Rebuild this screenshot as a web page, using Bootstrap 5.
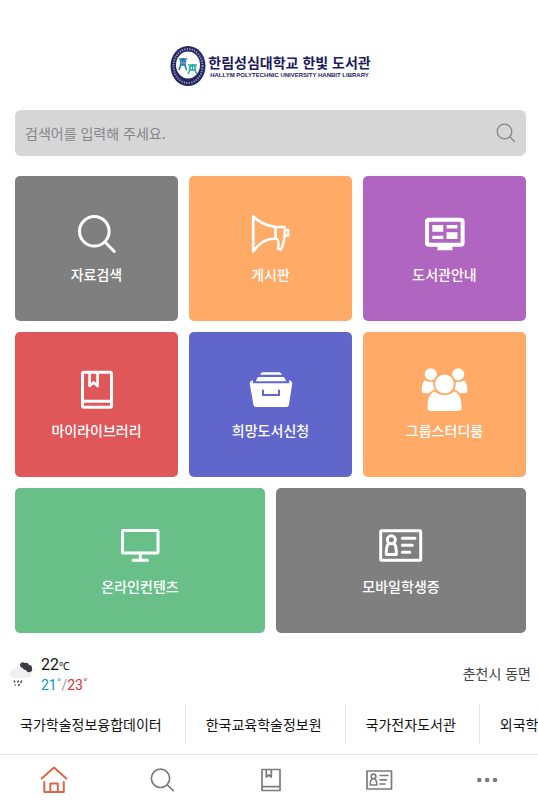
<!DOCTYPE html>
<html lang="ko">
<head>
<meta charset="utf-8">
<meta name="viewport" content="width=device-width, initial-scale=1">
<title>한림성심대학교 한빛 도서관</title>
<link href="https://cdn.jsdelivr.net/npm/bootstrap@5.3.0/dist/css/bootstrap.min.css" rel="stylesheet">
<style>
  body { font-family: "Noto Sans CJK KR", "Noto Sans", sans-serif; font-size: 14px; line-height: 22px; color: #111; background: #fff; }
  a { color: inherit; text-decoration: none; }
  svg { display: block; flex: none; }
  .line-art { fill: none; stroke: currentColor; stroke-linecap: round; stroke-linejoin: round; }

  .page-main { padding: 0 12px 0 15px; }
  .brand-row { height: 110px; padding-top: 22px; }
  .brand-link { gap: 2px; }
  .brand-name { color: #1b1a5e; font-size: 14px; font-weight: 700; line-height: 18px; }
  .brand-sub { color: #1b1a5e; font-family: "Liberation Sans", sans-serif; font-size: 6px; font-weight: 700; line-height: 8px; }

  .search-box { height: 46px; padding: 0 10px; margin-bottom: 20px; background: #d6d6d6; border-radius: 6px; }
  .search-box input { font-size: 14px; color: #555; }
  .search-box input::placeholder { color: #85868a; opacity: 1; }
  .search-box button { color: #858585; }

  .tile-grid { display: grid; grid-template-columns: repeat(6, 1fr); gap: 11px; }
  .tile { grid-column: span 2; height: 145px; padding-top: 36px; gap: 7px; border-radius: 5px; color: #fff; font-weight: 500; }
  .tile.wide { grid-column: span 3; }
  .t-gray { background: #7f7f7f; }
  .t-orange { background: #ffaa66; }
  .t-purple { background: #b066c0; }
  .t-red { background: #df5759; }
  .t-blue { background: #6166cb; }
  .t-green { background: #68c088; }

  .weather { padding: 22px 7px 0 8px; height: 71px; }
  .temps { font-family: Roboto, "Noto Sans", sans-serif; line-height: 20px; }
  .temp-now { font-size: 16px; }
  .temp-now small { font-size: 11px; line-height: 1; }
  .t-low { color: #0d97c4; }
  .t-high { color: #d6303a; }
  .t-sep { color: #999; }
  .place { color: #444; padding-top: 7px; }

  .site-links { overflow: hidden; white-space: nowrap; }
  .site-links a { flex: none; padding: 9px 23px 9px 20px; border-right: 1px solid #e3e3e3; }

  .tab-bar { border-top: 1px solid #e3e3e3; height: 46px; padding: 9px 35px 0 38px; color: #7b7b7b; }
  .tab-bar .active { color: #db6749; }
</style>
<script src="https://cdn.jsdelivr.net/npm/bootstrap@5.3.0/dist/js/bootstrap.bundle.min.js"></script>
</head>
<body>
<div class="d-flex flex-column min-vh-100">
  <main class="page-main">
    <header class="brand-row d-flex justify-content-center align-items-center">
      <a href="#" class="brand-link d-flex align-items-center">
        <svg width="36" height="42" viewBox="0 0 36 42" aria-hidden="true">
          <ellipse cx="18" cy="21" rx="17.5" ry="20" fill="#26265f"/>
          <ellipse cx="18" cy="21" rx="14.5" ry="17" fill="none" stroke="#8f93bb" stroke-width="2" stroke-dasharray="1.3 1.2"/>
          <ellipse cx="18" cy="20" rx="12" ry="13.5" fill="#fff"/>
          <g fill="none" stroke="#2375b5" stroke-width="1.5"><path d="M9 14h8M10 17q3-4 6 0M11 15v3q-1 5-2 7M15 15v3q0 5 2 7M10 20h6M13 13v7"/></g>
          <g fill="none" stroke="#27aaa5" stroke-width="1.5"><path d="M18 20h9M19 23q4-5 7 0M20 21v3q-1 3-2 5M25 21v3q0 3 2 5M19 25h7M22.500 19v6"/></g>
        </svg>
        <span class="d-flex flex-column align-items-center">
          <span class="brand-name">한림성심대학교 한빛 도서관</span>
          <span class="brand-sub">HALLYM POLYTECHNIC UNIVERSITY HANBIT LIBRARY</span>
        </span>
      </a>
    </header>

    <form class="search-box d-flex align-items-center" role="search">
      <input type="search" class="flex-grow-1 border-0 bg-transparent p-0" placeholder="검색어를 입력해 주세요." aria-label="검색어">
      <button type="button" class="border-0 bg-transparent p-0" aria-label="검색">
        <svg class="line-art" width="20" height="20" viewBox="0 0 20 20" stroke-width="1.3"><circle cx="8.500" cy="8.500" r="7.300"/><path d="M14 14l4.500 4.500"/></svg>
      </button>
    </form>

    <nav class="tile-grid" aria-label="주요 메뉴">
      <a href="#" class="tile t-gray d-flex flex-column align-items-center">
        <svg class="line-art" width="48" height="44" viewBox="0 0 48 44" stroke-width="3"><circle cx="21.300" cy="19.300" r="14.800"/><path d="M32 30l9.300 9.500"/></svg>
        <span>자료검색</span>
      </a>
      <a href="#" class="tile t-orange d-flex flex-column align-items-center">
        <svg class="line-art" width="48" height="44" viewBox="0 0 48 44" stroke-width="2.700"><path d="M6.200 4.500C12 10 20 14 28.500 15V26.500C20 26.500 12 31 6.200 39.500Z"/><path d="M28.500 15H37.500C38.200 24 37 32 34 37.500L30.800 36.500Q32.500 31 30.500 27.500L28.500 26.500" stroke-width="2.400"/><path d="M38.300 18h3v5.500h-3" stroke-width="2.400"/></svg>
        <span>게시판</span>
      </a>
      <a href="#" class="tile t-purple d-flex flex-column align-items-center">
        <svg width="48" height="44" viewBox="0 0 48 44" fill="currentColor"><rect x="6" y="7.700" width="35.600" height="25" rx="2" fill="none" stroke="currentColor" stroke-width="4"/><path d="M16.500 34h15v4.200h-15zM11.300 13h11v6.800h-11zM11.300 23.700h11V27h-11zM25.500 13h11v3.400h-11zM25.500 20.300h11V27h-11z"/></svg>
        <span>도서관안내</span>
      </a>
      <a href="#" class="tile t-red d-flex flex-column align-items-center">
        <svg class="line-art" width="48" height="44" viewBox="0 0 48 44" stroke-width="3"><rect x="9.500" y="4.200" width="29" height="35" rx="1.500"/><path d="M10 33.300h28"/><path d="M16.600 5v13l4-3.500 4 3.500V5" stroke-width="2.700"/></svg>
        <span>마이라이브러리</span>
      </a>
      <a href="#" class="tile t-blue d-flex flex-column align-items-center">
        <svg width="48" height="44" viewBox="0 0 48 44" fill="currentColor"><path d="M15.500 4.300h17q1.500 0 2.500 2.500H13q1-2.500 2.500-2.500zM12 9h24q2 0 3 4.300H9Q10 9 12 9zM5.800 12v3.300h36.400V12q3.500 1.500 3 4l-3.300 21q-.3 2-2.300 2H8.800q-2 0-2.300-2L2.800 16q-.5-2.500 3-4z"/><path d="M16 21.700v5.400h16v-5.400" fill="none" stroke="#6166cb" stroke-width="2"/></svg>
        <span>희망도서신청</span>
      </a>
      <a href="#" class="tile t-orange d-flex flex-column align-items-center">
        <svg width="48" height="44" viewBox="0 0 48 44" fill="currentColor"><circle cx="9.800" cy="6.300" r="6.100"/><circle cx="37.200" cy="6.300" r="6.100"/><path d="M4 12.500q6 2.500 12 1v11.700H3.500Q.5 25.200.7 22q.2-7.500 3.300-9.500zM43 12.500q-6 2.500-12 1v11.700h12.500q3 0 2.800-3.200-.2-7.500-3.300-9.500z"/><g stroke="#ffaa66" stroke-width="1.800"><path d="M13 22.500q10.500 7 21 0 7.500 3 7.500 17 0 4.500-5 4.500h-26q-5 0-5-4.500 0-14 7.500-17z"/><circle cx="23.500" cy="16" r="10.300"/></g></svg>
        <span>그룹스터디룸</span>
      </a>
      <a href="#" class="tile wide t-green d-flex flex-column align-items-center">
        <svg class="line-art" width="48" height="44" viewBox="0 0 48 44" stroke-width="3"><rect x="6.500" y="6.500" width="35.500" height="22.500" rx="1"/><path d="M24.300 29v7M17 36.300h14.500"/></svg>
        <span>온라인컨텐츠</span>
      </a>
      <a href="#" class="tile wide t-gray d-flex flex-column align-items-center">
        <svg class="line-art" width="48" height="44" viewBox="0 0 48 44" stroke-width="3"><rect x="3.700" y="6.700" width="40" height="29.600" rx="1"/><path d="M25.300 14.300H38M25.300 21.300h10M25.300 28.300h7.500"/><circle cx="14.300" cy="15.800" r="4"/><path d="M11.300 20q-2.300 2.500-2 10.500h10q.3-8-2-10.500"/></svg>
        <span>모바일학생증</span>
      </a>
    </nav>
  </main>

  <section class="weather d-flex align-items-start justify-content-between" aria-label="날씨">
    <div class="d-flex">
      <svg width="33" height="40" viewBox="0 0 33 40" aria-hidden="true">
        <path d="M5 23q-5-2-3-6 1-3 5-3 2-6 8-5l8 6q2 6-3 8z" fill="#f0f0f0"/>
        <path d="M12 9q2-3 5-1 3-1 4 2 3 0 3 3 1 3-2 4-3 1-4-2-3 0-3-2-3 0-3-4z" fill="#3b3d40"/>
        <path d="M6 25.500l1 2M10.500 25.500l-1 2M14 25.500l-1.500 2.500M7 29.500l.5 1M11.500 29l-1 2" stroke="#333" stroke-width="1.300"/>
      </svg>
      <div class="temps">
        <div class="temp-now">22<small>℃</small></div>
        <div><span class="t-low">21˚</span><span class="t-sep">/</span><span class="t-high">23˚</span></div>
      </div>
    </div>
    <span class="place">춘천시 동면</span>
  </section>

  <nav class="site-links d-flex" aria-label="관련 사이트">
    <a href="#">국가학술정보융합데이터</a>
    <a href="#">한국교육학술정보원</a>
    <a href="#">국가전자도서관</a>
    <a href="#">외국학술지지원센터</a>
  </nav>

  <nav class="tab-bar mt-auto d-flex justify-content-between" aria-label="하단 메뉴">
    <a href="#" class="active" aria-label="홈"><svg class="line-art" width="32" height="32" viewBox="0 0 32 32" stroke-width="2"><path d="M3.700 14.500L16 3.500l12.300 11M6.300 18v10h19.500V18M12.300 28v-8.500h7.500V28"/></svg></a>
    <a href="#" aria-label="검색"><svg class="line-art" width="32" height="32" viewBox="0 0 32 32" stroke-width="1.700"><circle cx="14.500" cy="14.300" r="9.200"/><path d="M21.300 21l6 5.700"/></svg></a>
    <a href="#" aria-label="마이라이브러리"><svg class="line-art" width="32" height="32" viewBox="0 0 32 32" stroke-width="1.700"><path d="M7 5.500h18v21H7zM7 22.700h18M11.300 5.500v7.500l2.500-2 2.500 2V5.500"/></svg></a>
    <a href="#" aria-label="모바일학생증"><svg class="line-art" width="32" height="32" viewBox="0 0 32 32" stroke-width="1.700"><path d="M4 7h24.500v18H4zM17 11.500h8M17 15.800h6.500M17 20h5"/><circle cx="10.500" cy="12.500" r="2.300"/><path d="M8.700 15q-1.700 2-1.500 6h6.600q.2-4-1.500-6"/></svg></a>
    <a href="#" aria-label="더보기"><svg width="32" height="32" viewBox="0 0 32 32" fill="currentColor"><circle cx="8.300" cy="16" r="2.300"/><circle cx="16.200" cy="16" r="2.300"/><circle cx="24" cy="16" r="2.300"/></svg></a>
  </nav>
</div>
</body>
</html>
